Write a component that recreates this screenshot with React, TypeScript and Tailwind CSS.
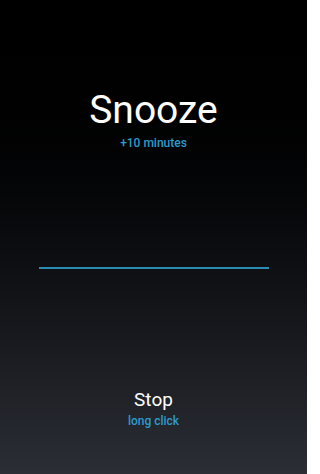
import React from 'react';

const App: React.FC = () => {
  return (
    <div
      className="w-[307px] h-[474px] flex flex-col items-center bg-gradient-to-b from-[#000000] to-[#2b2e35] text-white"
      style={{ fontFamily: 'Roboto, "Noto Sans", sans-serif' }}
    >
      {/* Snooze */}
      <div className="mt-[87px] text-[39px] leading-[46px] text-white">Snooze</div>
      <div className="mt-[2px] text-[12px] leading-[16px] font-medium text-[#2d9bcc]">+10 minutes</div>

      {/* Slider line */}
      <div className="mt-[116px] w-[230px] h-[2px] bg-[#2a8cb5]" />

      {/* Stop */}
      <div className="mt-[119px] text-[19px] leading-[24px] text-white">Stop</div>
      <div className="mt-[1px] text-[12px] leading-[16px] font-medium text-[#2d9bcc]">long click</div>
    </div>
  );
};

export default App;
